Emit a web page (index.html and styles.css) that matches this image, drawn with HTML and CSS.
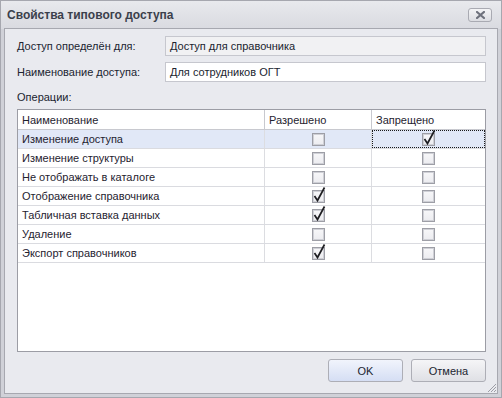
FILE: index.html
```html
<!DOCTYPE html>
<html>
<head>
    <meta charset="UTF-8">
    <title>Свойства типового доступа</title>
    <link rel="stylesheet" href="styles.css">
</head>
<body>

    <div class="window">

        <!-- Title bar -->
        <div class="titlebar">
            <span class="title">Свойства типового доступа</span>
            <button class="close">
                <svg width="9" height="8" viewBox="0 0 9 8">
                    <path d="M1 1 L8 7 M8 1 L1 7" stroke="#6f727d" stroke-width="2.2" stroke-linecap="square"/>
                </svg>
            </button>
        </div>

        <div class="content">

            <!-- Fields -->
            <div class="form">
                <label>Доступ определён для:</label>
                <div class="input readonly">Доступ для справочника</div>
                <label>Наименование доступа:</label>
                <div class="input">Для сотрудников ОГТ</div>
            </div>

            <div class="section-label">Операции:</div>

            <!-- Operations grid -->
            <div class="grid">
                <div class="row head">
                    <div class="cell">Наименование</div>
                    <div class="cell">Разрешено</div>
                    <div class="cell">Запрещено</div>
                </div>
                <div class="row selected">
                    <div class="cell">Изменение доступа</div>
                    <div class="cell check"><span class="box"></span></div>
                    <div class="cell check focus"><span class="box on"></span></div>
                </div>
                <div class="row">
                    <div class="cell">Изменение структуры</div>
                    <div class="cell check"><span class="box"></span></div>
                    <div class="cell check"><span class="box"></span></div>
                </div>
                <div class="row">
                    <div class="cell">Не отображать в каталоге</div>
                    <div class="cell check"><span class="box"></span></div>
                    <div class="cell check"><span class="box"></span></div>
                </div>
                <div class="row">
                    <div class="cell">Отображение справочника</div>
                    <div class="cell check"><span class="box on"></span></div>
                    <div class="cell check"><span class="box"></span></div>
                </div>
                <div class="row">
                    <div class="cell">Табличная вставка данных</div>
                    <div class="cell check"><span class="box on"></span></div>
                    <div class="cell check"><span class="box"></span></div>
                </div>
                <div class="row">
                    <div class="cell">Удаление</div>
                    <div class="cell check"><span class="box"></span></div>
                    <div class="cell check"><span class="box"></span></div>
                </div>
                <div class="row">
                    <div class="cell">Экспорт справочников</div>
                    <div class="cell check"><span class="box on"></span></div>
                    <div class="cell check"><span class="box"></span></div>
                </div>
            </div>

            <!-- Buttons -->
            <div class="buttons">
                <button class="btn default">OK</button>
                <button class="btn">Отмена</button>
            </div>

            <svg class="grip" width="11" height="11" viewBox="0 0 11 11">
                <path d="M10 2 L2 10 M10 5 L5 10 M10 8 L8 10" stroke="#9d9ea6" stroke-width="1"/>
            </svg>
        </div>
    </div>

    <script>
        // draw the check glyphs into the boxes
        document.querySelectorAll(".box.on").forEach(function(box) {
            box.innerHTML = '<svg class="tick" width="14" height="17" viewBox="0 0 14 17">' +
                '<path d="M2.5 10 L5.5 14.5 L12.5 1.5" fill="none" stroke="#1e1e22" stroke-width="1.7"/></svg>';
        });
    </script>
</body>
</html>
```

FILE: styles.css
```css
/* General Styling */
body {
    margin: 0;
    font-family: 'Liberation Sans', Arial, sans-serif;
    font-size: 11px;
    color: #20242f;
    background: #ffffff;
}

.window {
    position: relative;
    width: 502px;
    height: 398px;
    box-sizing: border-box;
    border: 1px solid #a6a7af;
    padding: 0 3px 3px 3px;
    display: flex;
    flex-direction: column;
    background: linear-gradient(to bottom, #e8e9ed 0, #d9dae0 28px, #d0d1d8 28px);
}

.titlebar {
    height: 27px;
    display: flex;
    align-items: center;
    justify-content: space-between;
    padding-left: 3px;
    padding-right: 6px;
}

.title {
    font-size: 12px;
    font-weight: bold;
    color: #3b3f4c;
}

.close {
    width: 24px;
    height: 14px;
    padding: 0;
    border: 1px solid #a9aab2;
    border-radius: 3px;
    background: linear-gradient(to bottom, #f4f4f6, #dcdde2);
    display: flex;
    align-items: center;
    justify-content: center;
}

.content {
    flex: 1;
    position: relative;
    border: 1px solid #a7a8b0;
    background: #e9eaef;
    padding: 7px 11px 11px 12px;
    display: flex;
    flex-direction: column;
}

.form {
    display: grid;
    grid-template-columns: 148px 1fr;
    grid-auto-rows: 20px;
    row-gap: 6px;
    align-items: center;
}

.input {
    height: 20px;
    box-sizing: border-box;
    border: 1px solid #c6c7ce;
    background: #ffffff;
    padding-left: 4px;
    line-height: 18px;
}

.input.readonly {
    background: #f1f1f3;
}

.section-label {
    line-height: 15px;
    margin: 8px 0 4px 0;
}

/* Grid */
.grid {
    flex: 1;
    border: 1px solid #9c9da5;
    background: #ffffff;
}

.row {
    display: grid;
    grid-template-columns: 247px 107px 1fr;
    height: 19px;
    box-sizing: border-box;
    border-bottom: 1px solid #dadbe0;
}

.row.head {
    height: 20px;
    border-bottom-color: #c8c9cf;
}

.row.selected {
    background: #e1e8f7;
}

.cell {
    border-right: 1px solid #dcdde1;
    padding-left: 4px;
    display: flex;
    align-items: center;
    color: #1f2330;
}

.head .cell {
    border-right-color: #c8c9cf;
}

.cell:last-child {
    border-right: none;
}

.cell.check {
    justify-content: center;
    padding-left: 0;
}

.cell.focus {
    outline: 1px dotted #1a1a1a;
    outline-offset: -1px;
}

.box {
    position: relative;
    width: 13px;
    height: 13px;
    box-sizing: border-box;
    border: 1px solid #9d9ea6;
    box-shadow: inset 0 0 0 1px #cfd0d6;
    background: linear-gradient(to bottom, #f7f7f9, #ececf0);
}

.tick {
    position: absolute;
    left: -1px;
    top: -5px;
}

/* Buttons */
.buttons {
    display: flex;
    justify-content: flex-end;
    gap: 8px;
    margin-top: 7px;
}

.btn {
    width: 75px;
    height: 23px;
    border: 1px solid #adaeb6;
    border-radius: 3px;
    background: linear-gradient(to bottom, #f5f5f7, #dfe0e5);
    font-family: 'Liberation Sans', Arial, sans-serif;
    font-size: 11px;
    color: #20242f;
    padding: 0;
}

.btn.default {
    background: linear-gradient(to bottom, #f1f4fc, #d5def4);
}

.grip {
    position: absolute;
    right: 0;
    bottom: 0;
}
```
